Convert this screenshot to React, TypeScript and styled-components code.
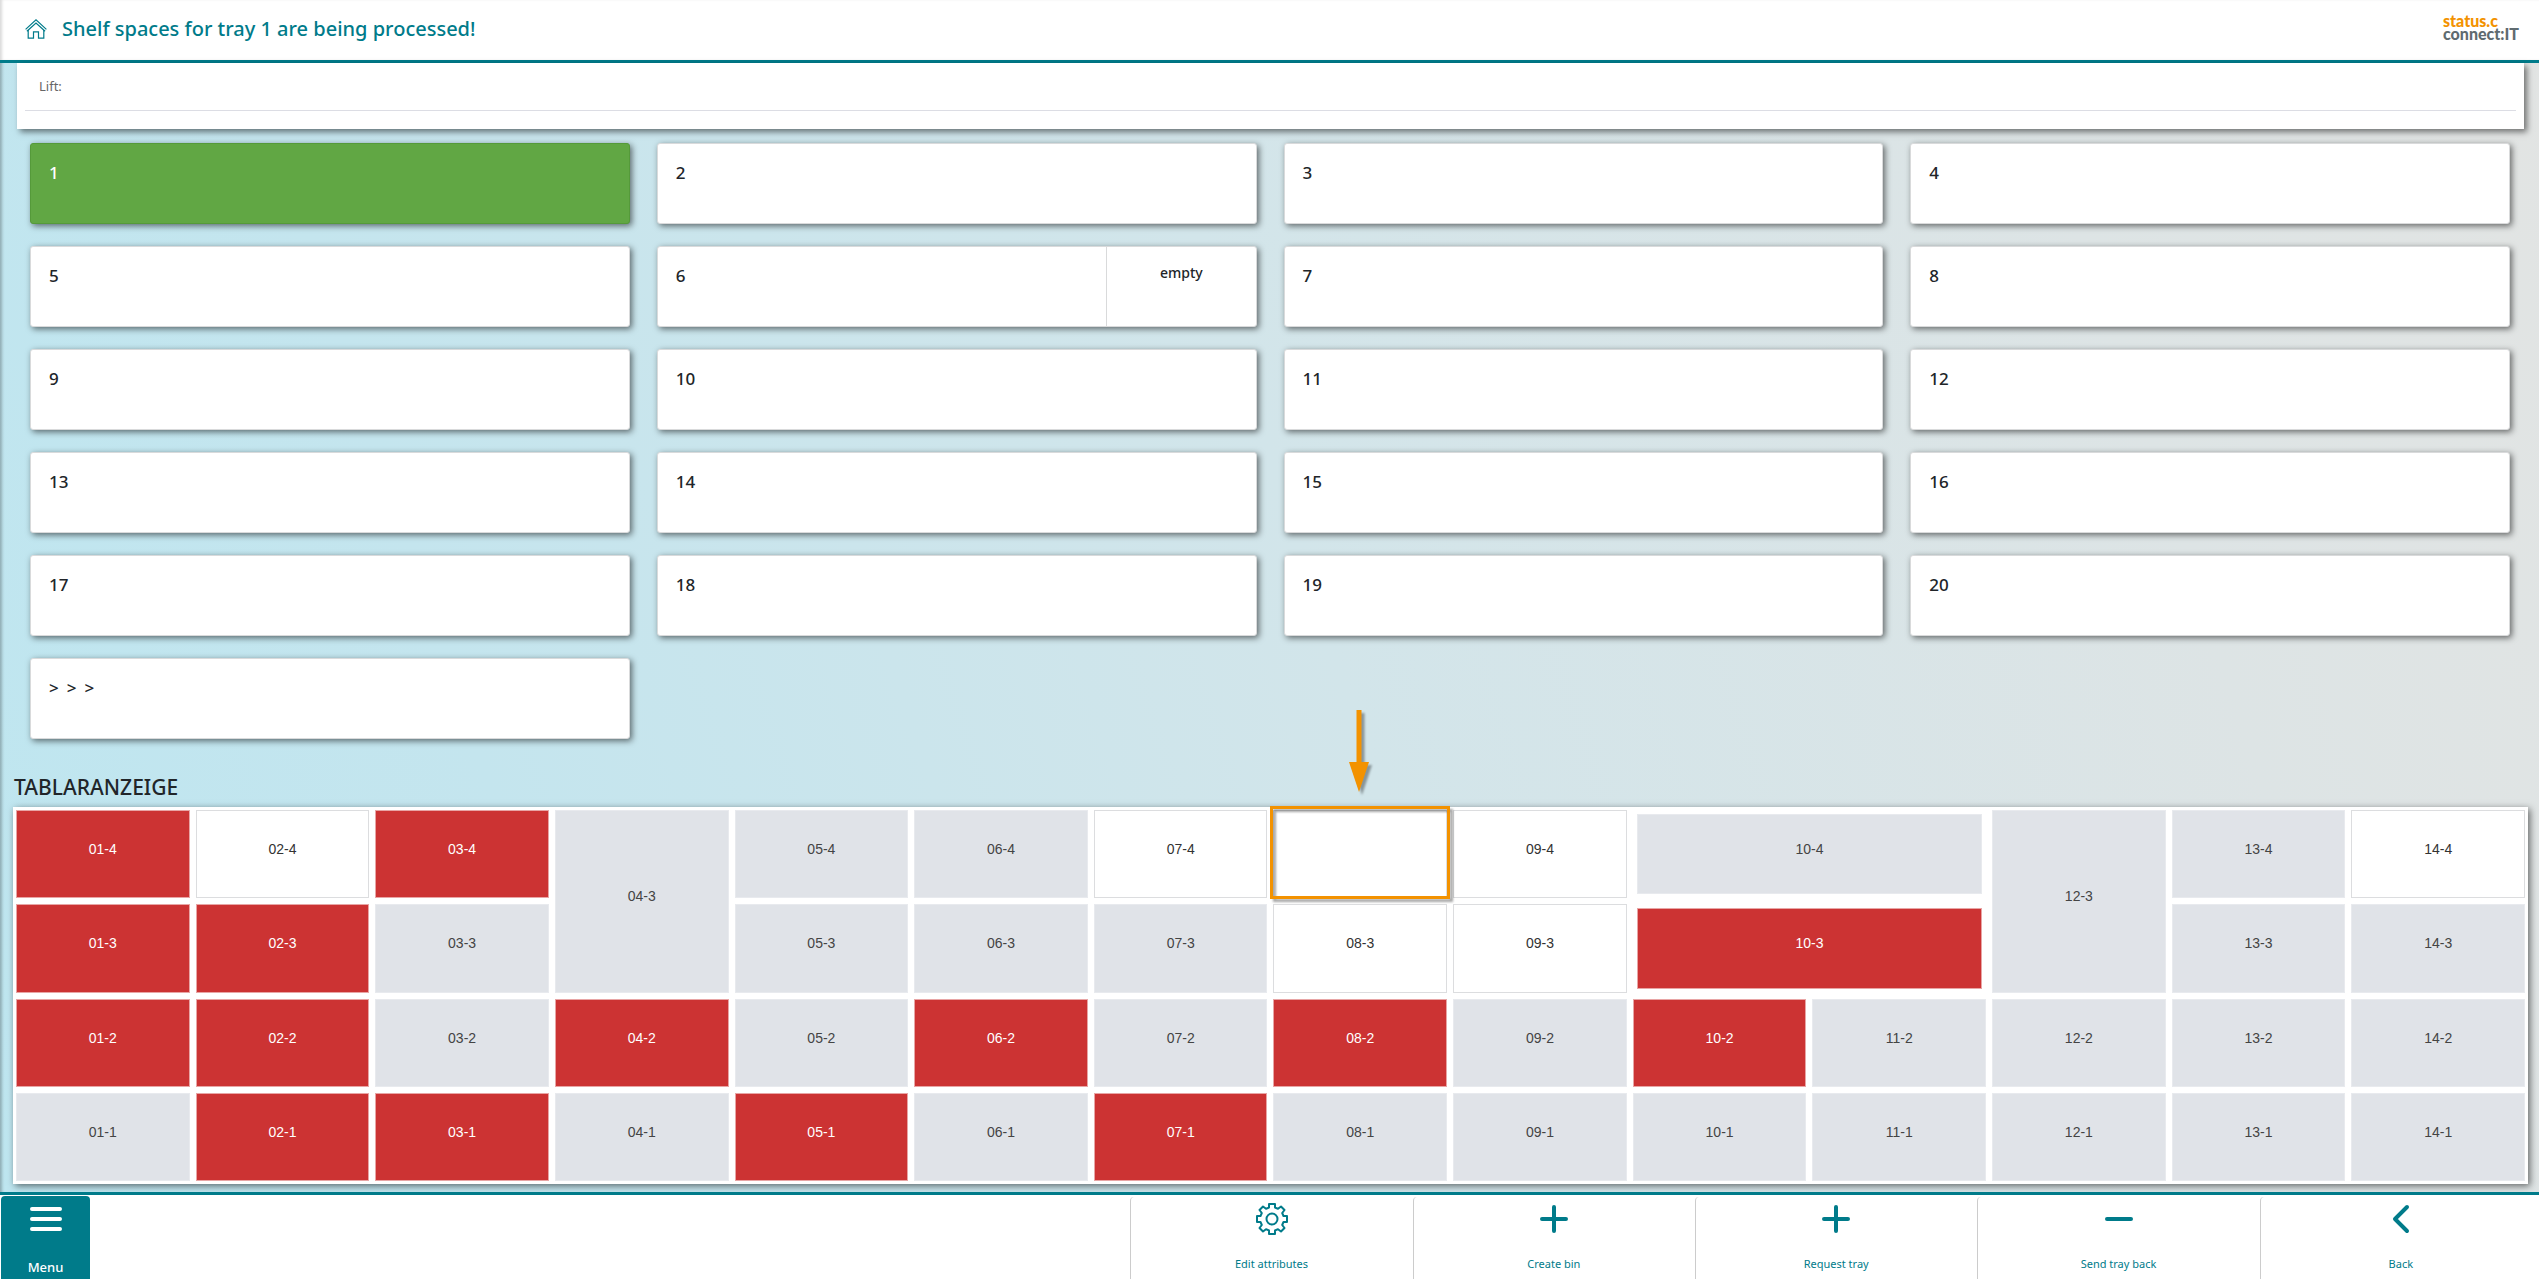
import React from 'react';
import styled, { createGlobalStyle, css } from 'styled-components';

const TEAL = '#007b8a';
const ORANGE = '#f39200';
const UI_FONT = `'Segoe UI', 'Noto Sans', sans-serif`;

const GlobalStyle = createGlobalStyle`
  *, *::before, *::after { box-sizing: border-box; }
  html, body { margin: 0; }
  body { font-family: ${UI_FONT}; color: #212529; }
  button { font: inherit; border: 0; margin: 0; cursor: pointer; }
`;

const Page = styled.div`
  display: flex;
  flex-direction: column;
  min-height: 100vh;
  overflow: hidden;
  background: linear-gradient(72deg, #bee6f0 0%, #c4e5ee 22%, #d2e5ea 52%, #dde4e5 82%, #e2e4e3 100%);
  box-shadow: inset 3px 0 3px -1px rgba(0, 0, 0, 0.25);
`;

const Header = styled.header`
  display: flex;
  align-items: center;
  justify-content: space-between;
  height: 63px;
  padding: 0 20px 2px 25px;
  background: #fff;
  border-bottom: 3px solid ${TEAL};
  box-shadow: inset 3px 0 3px -1px rgba(0, 0, 0, 0.15);
`;

const TitleGroup = styled.div`
  display: flex;
  align-items: center;
  gap: 15px;
  color: ${TEAL};
`;

const HomeLink = styled.a`
  display: flex;
  color: inherit;
`;

const Title = styled.h1`
  margin: 0;
  font-size: 20px;
  line-height: 28px;
  font-weight: 500;
`;

const Logo = styled.div`
  display: flex;
  flex-direction: column;
  padding-bottom: 4px;
  font-family: Lato, sans-serif;
  font-size: 16px;
  line-height: 13px;
  font-weight: 900;
  color: #5f6b70;
`;

const LogoTop = styled.span`
  color: ${ORANGE};
`;

const Main = styled.main`
  flex: 1;
  display: flex;
  flex-direction: column;
  padding: 0 11px 8px 13px;
`;

const InfoCard = styled.section`
  height: 66px;
  margin: 0 4px;
  padding: 0 8px;
  background: #fff;
  box-shadow: 3px 3px 6px rgba(0, 0, 0, 0.5);
`;

const InfoRow = styled.div`
  height: 48px;
  padding: 13px 14px 0;
  border-bottom: 1px solid #dcdde4;
  font-size: 13px;
  line-height: 20px;
  color: #666;
`;

const TileGrid = styled.div`
  display: grid;
  grid-template-columns: repeat(4, 1fr);
  grid-auto-rows: 81px;
  gap: 22px 27px;
  padding: 14px 18px 0 17px;
`;

const Tile = styled.button<{ $active?: boolean }>`
  display: flex;
  align-items: stretch;
  padding: 0;
  text-align: left;
  font-size: 17px;
  line-height: 24px;
  font-weight: 500;
  color: #212529;
  background: #fff;
  border: 1px solid #d9dadb;
  border-radius: 3px;
  box-shadow: 2px 2px 6px rgba(0, 0, 0, 0.55);
  ${({ $active }) =>
    $active &&
    css`
      color: #fff;
      background: #61a744;
      border-color: #559a3a;
    `}
`;

const TileName = styled.span`
  flex: 1;
  display: flex;
  gap: 8px;
  padding: 17px 18px;
`;

const TileNote = styled.span`
  flex: 0 0 25%;
  padding: 14px 0;
  border-left: 1px solid #d9dadb;
  text-align: center;
  font-size: 14px;
`;

const SectionTitle = styled.h2`
  margin: 32px 0 4px 1px;
  font-size: 21px;
  line-height: 32px;
  font-weight: 500;
`;

const Tray = styled.section`
  display: grid;
  grid-template-columns: repeat(14, 1fr);
  grid-template-rows: repeat(4, 1fr);
  height: 377px;
  background: #fff;
  box-shadow: 2px 2px 7px rgba(0, 0, 0, 0.55);
`;

const Slot = styled.div<{ $col: number; $row: number; $cols: number; $rows: number }>`
  position: relative;
  display: grid;
  grid-column: ${({ $col, $cols }) => `${$col} / span ${$cols}`};
  grid-row: ${({ $row, $rows }) => `${$row} / span ${$rows}`};
  padding: ${({ $cols }) => ($cols > 1 ? '7px' : '3px')};
`;

type Kind = 'used' | 'blocked' | 'free';

const kinds: Record<Kind, ReturnType<typeof css>> = {
  used: css`
    color: #fff;
    background: #cc3333;
    border-color: #e8a5a5;
  `,
  blocked: css`
    color: #444;
    background: #e0e3e8;
    border-color: #e8eaee;
  `,
  free: css`
    color: #333;
    background: #fff;
    border-color: #dcdddf;
  `,
};

const Bin = styled.button<{ $kind: Kind }>`
  padding: 0 0 10px;
  font-family: 'Liberation Sans', Arial, sans-serif;
  font-size: 14px;
  line-height: 20px;
  border: 1px solid;
  ${({ $kind }) => kinds[$kind]}
`;

const Highlight = styled.div`
  position: absolute;
  inset: -1px 0 2px 0;
  z-index: 1;
  border: 3px solid ${ORANGE};
  filter: drop-shadow(3px 3px 1px rgba(0, 0, 0, 0.35));
  pointer-events: none;
`;

const Arrow = styled.svg`
  position: absolute;
  left: 50%;
  bottom: calc(100% + 15px);
  margin-left: -11px;
  overflow: visible;
  filter: drop-shadow(3px 3px 1px rgba(0, 0, 0, 0.35));
  pointer-events: none;
`;

const Footer = styled.footer`
  display: flex;
  justify-content: space-between;
  height: 87px;
  padding-left: 1px;
  overflow: hidden;
  background: #fff;
  border-top: 3px solid ${TEAL};
`;

const MenuButton = styled.button`
  display: flex;
  flex-direction: column;
  align-items: center;
  justify-content: space-between;
  width: 89px;
  margin-top: 1px;
  padding: 10px 0 2px;
  border-radius: 4px 4px 0 0;
  color: #fff;
  background: ${TEAL};
  font-size: 13px;
  line-height: 20px;
  font-weight: 500;
`;

const Actions = styled.nav`
  display: flex;
  margin-right: -3px;
`;

const Action = styled.button`
  display: flex;
  flex-direction: column;
  align-items: center;
  justify-content: space-between;
  width: 11.12vw;
  margin-top: 2px;
  padding: 5px 1px 6px 0;
  color: ${TEAL};
  background: #fff;
  border-left: 1px solid #ccc;
  border-radius: 4px 0 0 0;
  font-size: 11px;
  line-height: 18px;
`;

const HomeIcon = () => (
  <svg width="22" height="20" viewBox="0 0 22 20" fill="none" stroke="currentColor" strokeWidth="1.2" aria-hidden="true">
    <path d="M0.6 10.4 11 .9l10.4 9.5" />
    <path d="M1.9 12.2 11 4l9.1 8.2" />
    <path d="M3.2 11v8.2h5.3v-6.4h5v6.4h5.3V11" />
  </svg>
);

const GearIcon = () => (
  <svg width="34" height="34" viewBox="0 0 34 34" fill="none" stroke="currentColor" strokeWidth="2" strokeLinejoin="round" aria-hidden="true">
    <path d="M14 2h6v3.500l3 1.300 3-2.300 3.500 3.500-2.300 3 1.300 3H32v6h-3.500l-1.300 3 2.300 3-3.500 3.500-3-2.300-3 1.300V32h-6v-3.500l-3-1.300-3 2.300L4.500 26l2.300-3-1.300-3H2v-6h3.500l1.300-3-2.300-3L8 4.500l3 2.300 3-1.300z" />
    <circle cx="17" cy="17" r="5.500" />
  </svg>
);

const ActionIcon = ({ d }: { d: string }) => (
  <svg width="34" height="34" viewBox="0 0 34 34" fill="none" stroke="currentColor" strokeWidth="4" strokeLinecap="round" strokeLinejoin="round" aria-hidden="true">
    <path d={d} />
  </svg>
);

const PLUS = 'M17 5v24M5 17h24';
const MINUS = 'M5 17h24';
const BACK = 'M23 5 11 17l12 12';

const tiles = Array.from({ length: 20 }, (_, i) => i + 1);

const used = ['01-4', '03-4', '01-3', '02-3', '10-3', '01-2', '02-2', '04-2', '06-2', '08-2', '10-2', '02-1', '03-1', '05-1', '07-1'];
const free = ['02-4', '07-4', '08-4', '09-4', '08-3', '09-3', '14-4'];
const merged: Record<string, { cols: number; rows: number }> = {
  '04-3': { cols: 1, rows: 2 },
  '12-3': { cols: 1, rows: 2 },
  '10-4': { cols: 2, rows: 1 },
  '10-3': { cols: 2, rows: 1 },
};
const covered = ['04-4', '12-4', '11-4', '11-3'];
const HIGHLIGHTED = '08-4';

const bins = [4, 3, 2, 1].flatMap((level) =>
  Array.from({ length: 14 }, (_, i) => {
    const id = `${String(i + 1).padStart(2, '0')}-${level}`;
    const { cols, rows } = merged[id] ?? { cols: 1, rows: 1 };
    const kind: Kind = used.includes(id) ? 'used' : free.includes(id) ? 'free' : 'blocked';
    return { id, kind, cols, rows, col: i + 1, row: 6 - level - rows };
  }).filter(({ id }) => !covered.includes(id)),
);

export default function App() {
  return (
    <Page>
      <GlobalStyle />
      <Header>
        <TitleGroup>
          <HomeLink href="#" aria-label="Home">
            <HomeIcon />
          </HomeLink>
          <Title>Shelf spaces for tray 1 are being processed!</Title>
        </TitleGroup>
        <Logo>
          <LogoTop>status.c</LogoTop>
          <span>connect:IT</span>
        </Logo>
      </Header>

      <Main>
        <InfoCard>
          <InfoRow>Lift:</InfoRow>
        </InfoCard>

        <TileGrid>
          {tiles.map((n) => (
            <Tile key={n} type="button" $active={n === 1}>
              <TileName>{n}</TileName>
              {n === 6 && <TileNote>empty</TileNote>}
            </Tile>
          ))}
          <Tile type="button">
            <TileName>
              <span>&gt;</span>
              <span>&gt;</span>
              <span>&gt;</span>
            </TileName>
          </Tile>
        </TileGrid>

        <SectionTitle>TABLARANZEIGE</SectionTitle>
        <Tray>
          {bins.map(({ id, kind, cols, rows, col, row }) => (
            <Slot key={id} $col={col} $row={row} $cols={cols} $rows={rows}>
              <Bin type="button" $kind={kind} aria-label={id}>
                {id === HIGHLIGHTED ? null : id}
              </Bin>
              {id === HIGHLIGHTED && (
                <>
                  <Highlight />
                  <Arrow width="20" height="82" viewBox="0 0 20 82" fill={ORANGE} aria-hidden="true">
                    <path d="M7.500 0h5v52H20L10 82 0 52h7.500z" />
                  </Arrow>
                </>
              )}
            </Slot>
          ))}
        </Tray>
      </Main>

      <Footer>
        <MenuButton type="button">
          <svg width="34" height="26" viewBox="0 0 34 26" stroke="currentColor" strokeWidth="4" strokeLinecap="round" aria-hidden="true">
            <path d="M3 3h28M3 13h28M3 23h28" />
          </svg>
          Menu
        </MenuButton>
        <Actions>
          <Action type="button">
            <GearIcon />
            Edit attributes
          </Action>
          <Action type="button">
            <ActionIcon d={PLUS} />
            Create bin
          </Action>
          <Action type="button">
            <ActionIcon d={PLUS} />
            Request tray
          </Action>
          <Action type="button">
            <ActionIcon d={MINUS} />
            Send tray back
          </Action>
          <Action type="button">
            <ActionIcon d={BACK} />
            Back
          </Action>
        </Actions>
      </Footer>
    </Page>
  );
}
